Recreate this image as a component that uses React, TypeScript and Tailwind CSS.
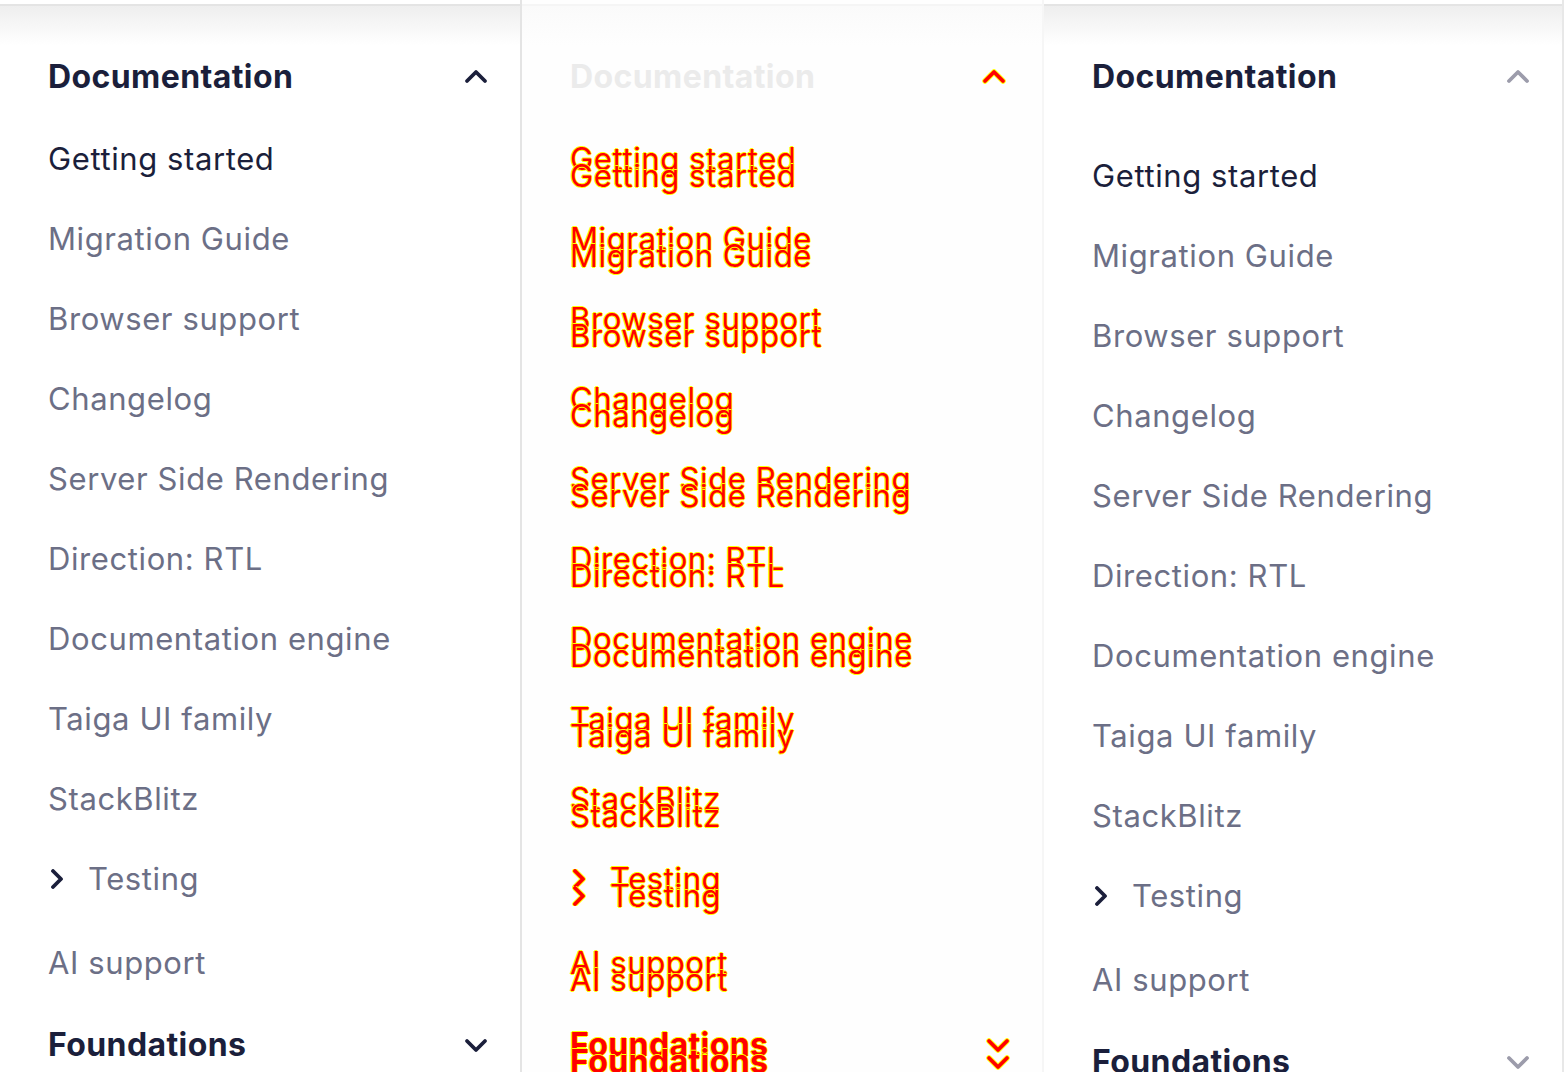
import React from 'react';

type Variant = 'expected' | 'actual' | 'diff';

const items = [
  'Getting started',
  'Migration Guide',
  'Browser support',
  'Changelog',
  'Server Side Rendering',
  'Direction: RTL',
  'Documentation engine',
  'Taiga UI family',
  'StackBlitz',
];

const diffText =
  'text-[#ff0000] [text-shadow:1px_0_#ffff00,-1px_0_#ffff00,0_1px_#ffff00,0_-1px_#ffff00]';

const Chevron: React.FC<{ dir: 'up' | 'down' | 'right'; variant: Variant; muted?: boolean }> = ({
  dir,
  variant,
  muted,
}) => {
  const points =
    dir === 'up' ? '3,15 12,6 21,15' : dir === 'down' ? '3,7 12,16 21,7' : '4,2 12,10 4,18';
  const size = dir === 'right' ? 'w-4 h-5' : 'w-6 h-[22px]';
  const box = dir === 'right' ? '0 0 16 20' : '0 0 24 22';
  const stroke = variant === 'diff' ? '#ff0000' : muted ? '#9c9cab' : '#1b1f3b';
  return (
    <svg viewBox={box} className={`${size} shrink-0`} fill="none">
      {variant === 'diff' && (
        <polyline points={points} stroke="#ffff00" strokeWidth="5.5" strokeLinecap="round" strokeLinejoin="round" />
      )}
      <polyline points={points} stroke={stroke} strokeWidth="3.8" strokeLinecap="round" strokeLinejoin="round" />
    </svg>
  );
};

const NavBody: React.FC<{ variant: Variant; shifted: boolean; muted?: boolean }> = ({
  variant,
  shifted,
  muted,
}) => {
  const itemColor = variant === 'diff' ? diffText : 'text-[#6c6f86]';
  const activeColor = variant === 'diff' ? diffText : 'text-[#1b1f3b]';
  const row = 'h-20 flex items-center pl-12 text-[31px] tracking-[0.6px]';
  return (
    <div className={`col-start-1 row-start-1 flex flex-col ${shifted ? 'pt-[39px]' : 'pt-[22px]'}`}>
      {items.map((item, i) => (
        <div key={item} className={`${row} ${i === 0 ? activeColor : itemColor}`}>
          {item}
        </div>
      ))}
      <div className={`${row} ${itemColor}`}>
        <span className="w-10 flex pl-[1px]">
          <Chevron dir="right" variant={variant} />
        </span>
        Testing
      </div>
      <div className={`${row} mt-1 ${itemColor}`}>AI support</div>
      <div className="h-10 mt-[22px] flex items-center justify-between pl-12 pr-8">
        <span
          className={`text-[32px] font-bold tracking-[0.4px] ${variant === 'diff' ? diffText : 'text-[#1b1f3b]'}`}
        >
          Foundations
        </span>
        <Chevron dir="down" variant={variant} muted={muted} />
      </div>
    </div>
  );
};

const Panel: React.FC<{ variant: Variant }> = ({ variant }) => {
  const isDiff = variant === 'diff';
  const muted = variant === 'actual';
  const border =
    variant === 'expected'
      ? 'w-[522px] border-r-2 border-[#e4e4e4]'
      : isDiff
        ? 'w-[522px] border-r-2 border-[#f6f6f6]'
        : 'w-[520px] border-r-2 border-[#e8e8e8]';
  return (
    <div className={`h-[1072px] overflow-hidden shrink-0 ${border} ${isDiff ? 'bg-[#fefefe]' : 'bg-white'}`}>
      <div className="h-1" />
      <div
        className={`h-[41px] border-t-2 ${
          isDiff
            ? 'border-[#f5f5f5] bg-gradient-to-b from-[#fafafa] to-[#fefefe]'
            : 'border-[#e4e4e4] bg-gradient-to-b from-[#eeeeee] to-white'
        }`}
      />
      <div className="h-3" />
      <div className={`h-10 flex items-center justify-between pl-12 ${isDiff ? 'pr-[36px]' : 'pr-8'}`}>
        <span
          className={`text-[32px] font-bold tracking-[0.4px] ${isDiff ? 'text-[#ebebeb]' : 'text-[#1b1f3b]'}`}
        >
          Documentation
        </span>
        <Chevron dir="up" variant={variant} muted={muted} />
      </div>
      {isDiff ? (
        <div className="grid">
          <NavBody variant="diff" shifted={false} />
          <NavBody variant="diff" shifted />
        </div>
      ) : (
        <div className="grid">
          <NavBody variant={variant} shifted={variant === 'actual'} muted={muted} />
        </div>
      )}
    </div>
  );
};

export default function App() {
  return (
    <div className="w-[1566px] h-[1072px] overflow-hidden flex bg-white font-['Inter',sans-serif]">
      <Panel variant="expected" />
      <Panel variant="diff" />
      <Panel variant="actual" />
    </div>
  );
}
